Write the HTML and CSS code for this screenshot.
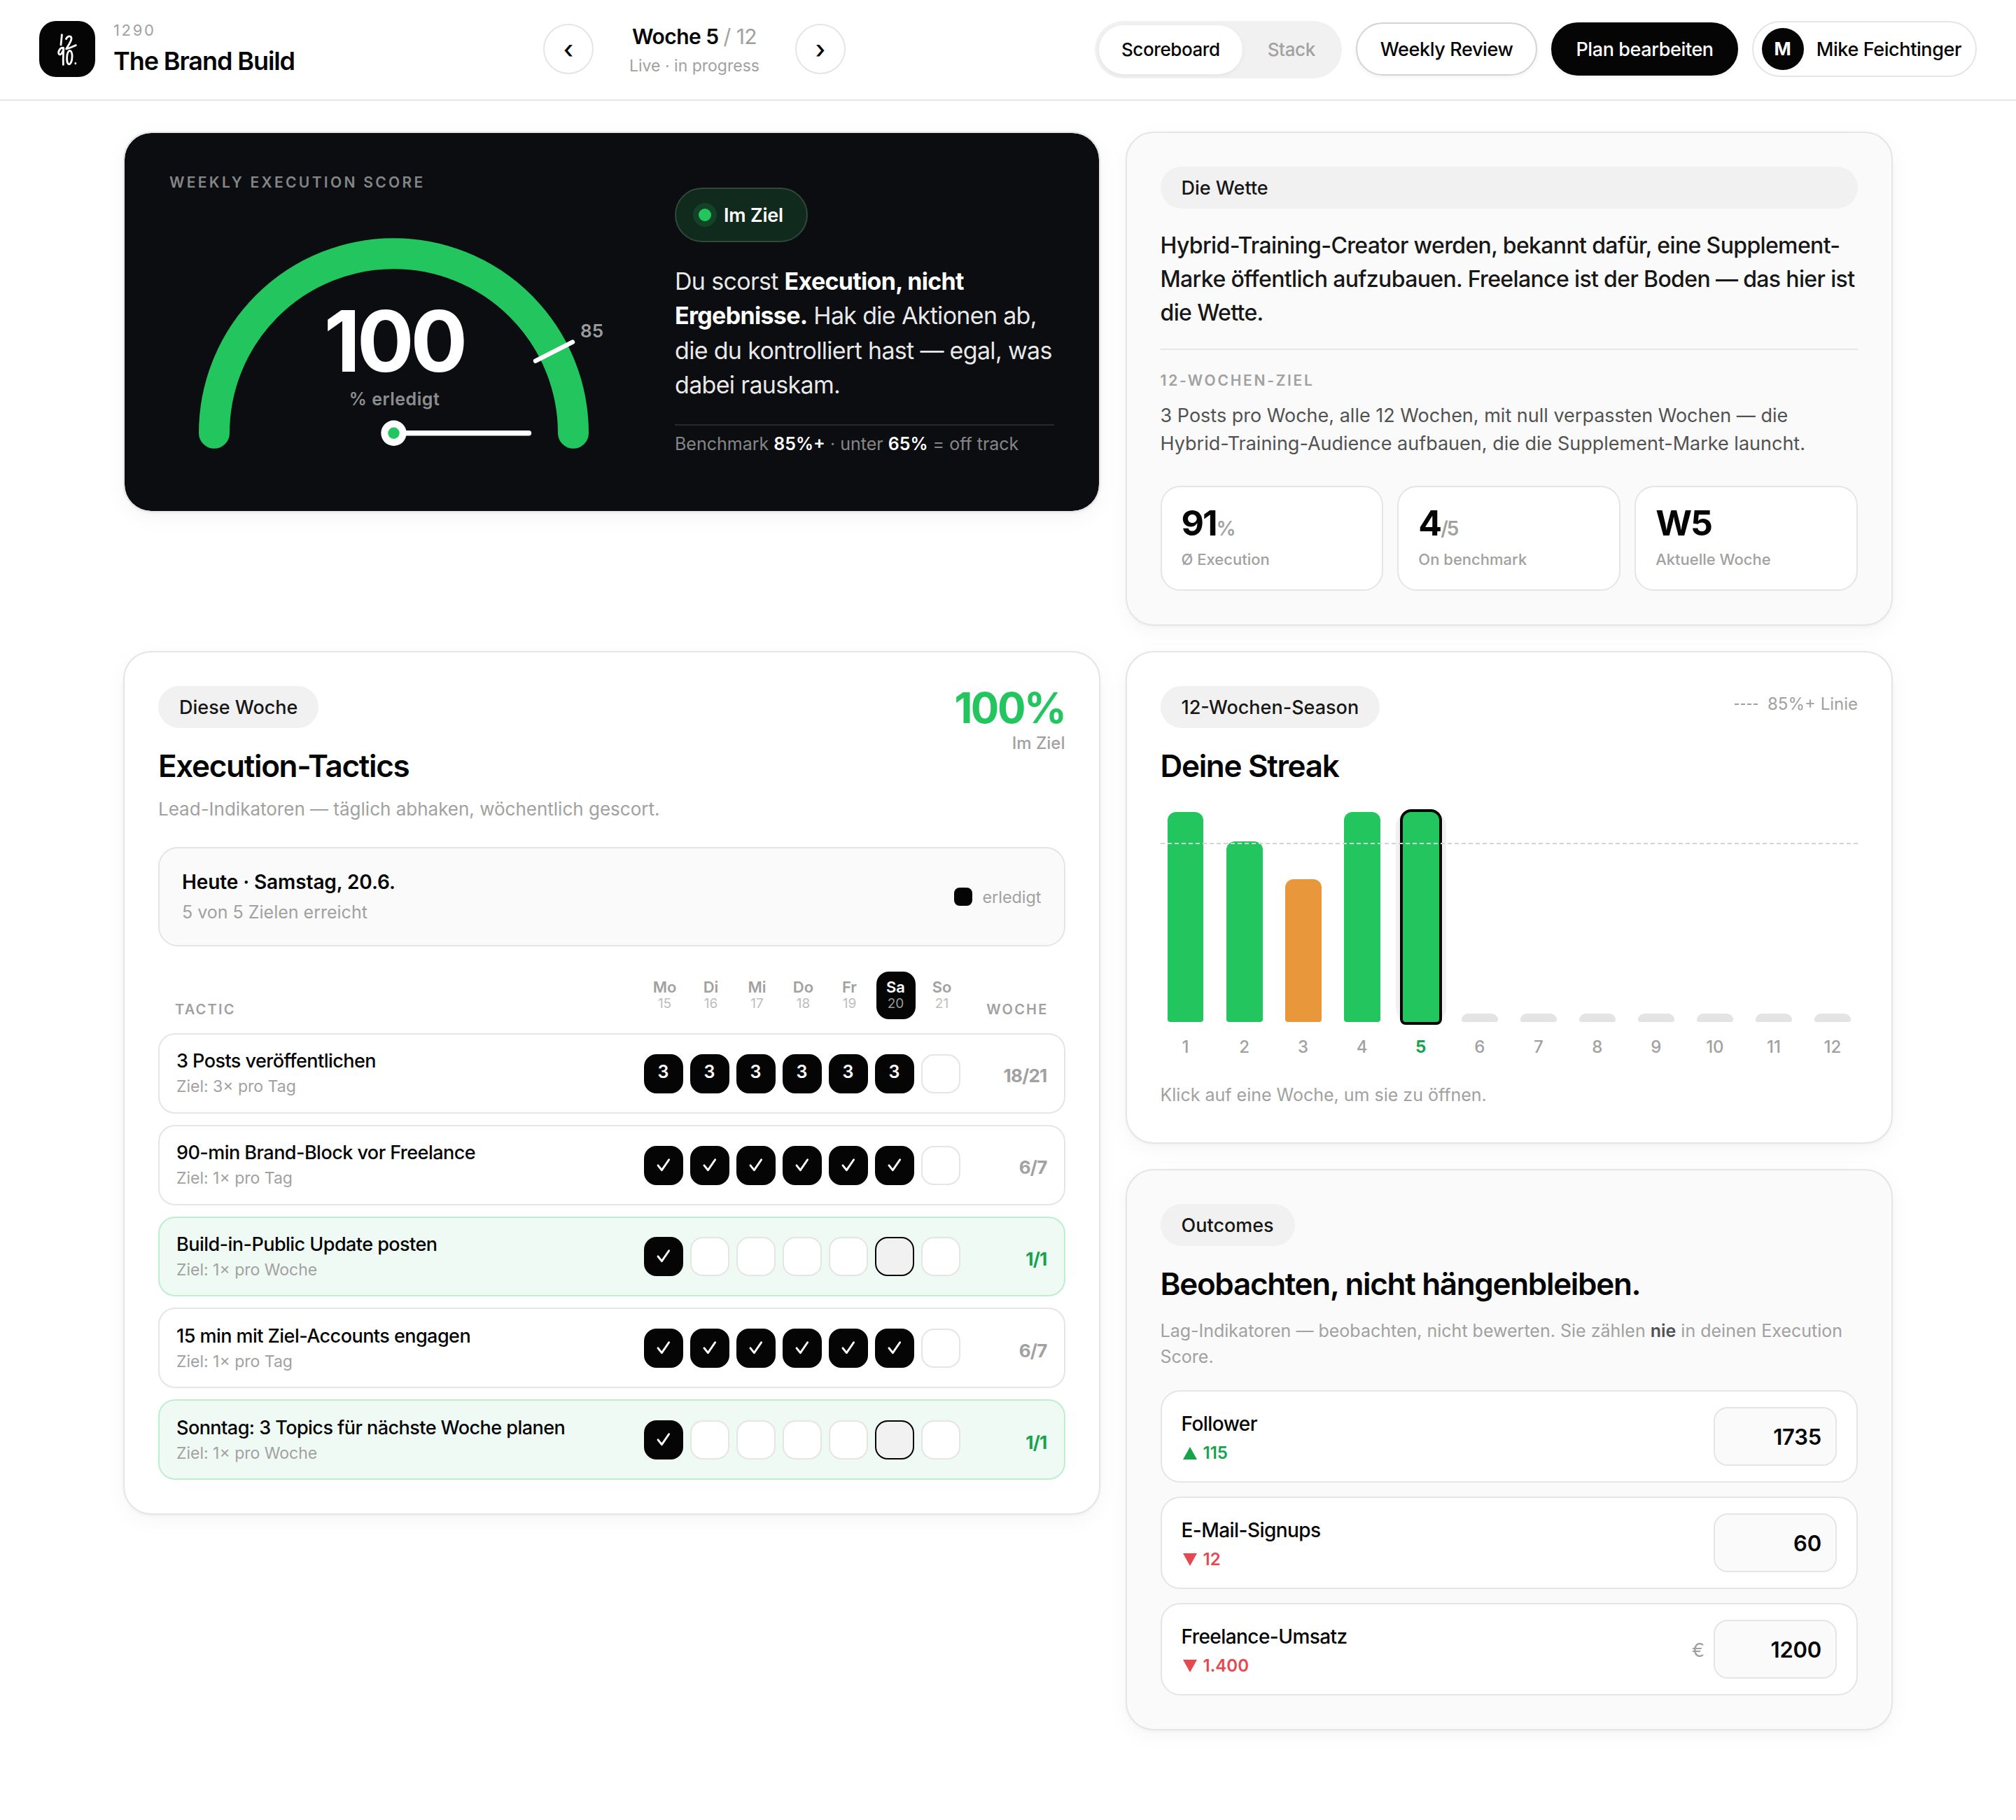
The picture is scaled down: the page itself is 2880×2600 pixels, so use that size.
FILE: index.html
```html
<!DOCTYPE html>
<html lang="de">
<head>
<meta charset="utf-8">
<title>The Brand Build – Scoreboard</title>
<link rel="stylesheet" href="styles.css">
</head>
<body>
<svg class="defs" aria-hidden="true">
  <symbol id="check" viewBox="0 0 52 52"><path d="M18 25.8 L23.4 32.6 L33.6 17.8" fill="none" stroke="currentColor" stroke-width="2.9" stroke-linecap="round" stroke-linejoin="round"/></symbol>
  <symbol id="tri-up" viewBox="0 0 20 18"><path d="M10 0 L20 18 H0 Z" fill="currentColor"/></symbol>
  <symbol id="tri-down" viewBox="0 0 20 18"><path d="M10 18 L20 0 H0 Z" fill="currentColor"/></symbol>
</svg>

<header class="topbar">
  <div class="brand">
    <div class="logo">
      <svg viewBox="0 0 80 80" fill="none" stroke="#fff" stroke-width="2.8" stroke-linecap="round" stroke-linejoin="round">
        <path d="M32.4 19.6 L31 34"/>
        <path d="M38.4 25.6 C40.5 20.5 46.5 20.6 46 25.4 C45.5 30 41.5 35 38.6 39.8 C42.5 39.4 48 36.4 52.4 34.6"/>
        <path d="M34.6 38.4 C30 37.4 26.2 44 28.4 47.4 C31 49.6 34.4 43.6 34.8 39.4 C34.4 47 34 55 34.4 62.4"/>
        <path d="M43.6 42.4 C38.6 43.4 38.4 61.6 42.4 61.8 C47.6 61.8 49 43.4 43.6 42.4 Z"/>
        <path d="M51.8 60.4 V60.8"/>
      </svg>
    </div>
    <div class="brand-text">
      <span class="brand-code">1290</span>
      <span class="brand-name">The Brand Build</span>
    </div>
  </div>
  <nav class="week-nav">
    <button class="round-btn">‹</button>
    <div class="week-label">
      <div class="week-now">Woche 5 <span>/ 12</span></div>
      <div class="week-state">Live · in progress</div>
    </div>
    <button class="round-btn">›</button>
  </nav>
  <div class="actions">
    <div class="toggle"><span class="toggle-item active">Scoreboard</span><span class="toggle-item">Stack</span></div>
    <button class="btn btn-light">Weekly Review</button>
    <button class="btn btn-dark">Plan bearbeiten</button>
    <div class="profile"><span class="avatar">M</span><span class="profile-name">Mike Feichtinger</span></div>
  </div>
</header>

<main class="board">
  <section class="card score">
    <div class="gauge">
      <div class="gauge-title">WEEKLY EXECUTION SCORE</div>
      <svg class="gauge-svg" viewBox="0 0 640 370">
        <path class="arc" d="M64 322.8 A256.5 256.5 0 0 1 577 322.8"/>
        <path class="tick" d="M523 219.6 L576 192.6"/>
        <text class="tick-label" x="587" y="186">85</text>
        <path class="needle" d="M320.5 322.8 H513.5"/>
        <circle cx="320.5" cy="322.8" r="18.2" fill="#fff"/>
        <circle cx="320.5" cy="322.8" r="8.2" fill="#22c55e"/>
        <text class="gauge-value" x="321" y="235">100</text>
        <text class="gauge-unit" x="321.5" y="283">% erledigt</text>
      </svg>
    </div>
    <div class="score-copy">
      <div class="status"><i></i>Im Ziel</div>
      <p class="score-text">Du scorst <b>Execution, nicht Ergebnisse.</b> Hak die Aktionen ab, die du kontrolliert hast — egal, was dabei rauskam.</p>
      <p class="score-foot">Benchmark <b>85%+</b> · unter <b>65%</b> = off track</p>
    </div>
  </section>

  <section class="card soft bet">
    <div class="pill">Die Wette</div>
    <p class="bet-text">Hybrid-Training-Creator werden, bekannt dafür, eine Supplement-Marke öffentlich aufzubauen. Freelance ist der Boden — das hier ist die Wette.</p>
    <div class="goal">
      <div class="goal-label">12-WOCHEN-ZIEL</div>
      <p class="goal-text">3 Posts pro Woche, alle 12 Wochen, mit null verpassten Wochen — die Hybrid-Training-Audience aufbauen, die die Supplement-Marke launcht.</p>
    </div>
    <div class="stats">
      <div class="stat"><div class="stat-value">91<small>%</small></div><div class="stat-label">Ø Execution</div></div>
      <div class="stat"><div class="stat-value">4<small>/5</small></div><div class="stat-label">On benchmark</div></div>
      <div class="stat"><div class="stat-value">W5</div><div class="stat-label">Aktuelle Woche</div></div>
    </div>
  </section>

  <section class="card tactics">
    <div class="card-head">
      <div>
        <div class="pill">Diese Woche</div>
        <h2 class="title">Execution-Tactics</h2>
        <p class="sub">Lead-Indikatoren — täglich abhaken, wöchentlich gescort.</p>
      </div>
      <div class="total"><div class="total-value">100%</div><div class="total-label">Im Ziel</div></div>
    </div>
    <div class="today">
      <div><div class="today-date">Heute · Samstag, 20.6.</div><div class="today-sub">5 von 5 Zielen erreicht</div></div>
      <div class="today-key"><i></i>erledigt</div>
    </div>
    <div class="thead">
      <span class="th">TACTIC</span>
      <div class="days">
        <div class="day">Mo<small>15</small></div><div class="day">Di<small>16</small></div><div class="day">Mi<small>17</small></div><div class="day">Do<small>18</small></div><div class="day">Fr<small>19</small></div><div class="day now">Sa<small>20</small></div><div class="day">So<small>21</small></div>
      </div>
      <span class="th th-right">WOCHE</span>
    </div>
    <div class="rows">
      <div class="row">
        <div><div class="row-name">3 Posts veröffentlichen</div><div class="row-goal">Ziel: 3× pro Tag</div></div>
        <div class="cells"><span class="cell on">3</span><span class="cell on">3</span><span class="cell on">3</span><span class="cell on">3</span><span class="cell on">3</span><span class="cell on">3</span><span class="cell"></span></div>
        <div class="count">18/21</div>
      </div>
      <div class="row">
        <div><div class="row-name">90-min Brand-Block vor Freelance</div><div class="row-goal">Ziel: 1× pro Tag</div></div>
        <div class="cells"><span class="cell on"><svg><use href="#check"/></svg></span><span class="cell on"><svg><use href="#check"/></svg></span><span class="cell on"><svg><use href="#check"/></svg></span><span class="cell on"><svg><use href="#check"/></svg></span><span class="cell on"><svg><use href="#check"/></svg></span><span class="cell on"><svg><use href="#check"/></svg></span><span class="cell"></span></div>
        <div class="count">6/7</div>
      </div>
      <div class="row done">
        <div><div class="row-name">Build-in-Public Update posten</div><div class="row-goal">Ziel: 1× pro Woche</div></div>
        <div class="cells"><span class="cell on"><svg><use href="#check"/></svg></span><span class="cell"></span><span class="cell"></span><span class="cell"></span><span class="cell"></span><span class="cell current"></span><span class="cell"></span></div>
        <div class="count">1/1</div>
      </div>
      <div class="row">
        <div><div class="row-name">15 min mit Ziel-Accounts engagen</div><div class="row-goal">Ziel: 1× pro Tag</div></div>
        <div class="cells"><span class="cell on"><svg><use href="#check"/></svg></span><span class="cell on"><svg><use href="#check"/></svg></span><span class="cell on"><svg><use href="#check"/></svg></span><span class="cell on"><svg><use href="#check"/></svg></span><span class="cell on"><svg><use href="#check"/></svg></span><span class="cell on"><svg><use href="#check"/></svg></span><span class="cell"></span></div>
        <div class="count">6/7</div>
      </div>
      <div class="row done">
        <div><div class="row-name">Sonntag: 3 Topics für nächste Woche planen</div><div class="row-goal">Ziel: 1× pro Woche</div></div>
        <div class="cells"><span class="cell on"><svg><use href="#check"/></svg></span><span class="cell"></span><span class="cell"></span><span class="cell"></span><span class="cell"></span><span class="cell current"></span><span class="cell"></span></div>
        <div class="count">1/1</div>
      </div>
    </div>
  </section>

  <div class="side">
    <section class="card season">
      <div class="card-head">
        <div>
          <div class="pill">12-Wochen-Season</div>
          <h2 class="title">Deine Streak</h2>
        </div>
        <div class="legend"><i></i>85%+ Linie</div>
      </div>
      <div class="chart">
        <div class="col"><div class="track"><i class="bar good" style="height:100%"></i></div><span>1</span></div>
        <div class="col"><div class="track"><i class="bar good" style="height:86%"></i></div><span>2</span></div>
        <div class="col"><div class="track"><i class="bar warn" style="height:68%"></i></div><span>3</span></div>
        <div class="col"><div class="track"><i class="bar good" style="height:100%"></i></div><span>4</span></div>
        <div class="col selected"><div class="track"><i class="bar good" style="height:100%"></i></div><span>5</span></div>
        <div class="col"><div class="track"><i class="bar" style="height:4%"></i></div><span>6</span></div>
        <div class="col"><div class="track"><i class="bar" style="height:4%"></i></div><span>7</span></div>
        <div class="col"><div class="track"><i class="bar" style="height:4%"></i></div><span>8</span></div>
        <div class="col"><div class="track"><i class="bar" style="height:4%"></i></div><span>9</span></div>
        <div class="col"><div class="track"><i class="bar" style="height:4%"></i></div><span>10</span></div>
        <div class="col"><div class="track"><i class="bar" style="height:4%"></i></div><span>11</span></div>
        <div class="col"><div class="track"><i class="bar" style="height:4%"></i></div><span>12</span></div>
        <div class="target"></div>
      </div>
      <p class="hint">Klick auf eine Woche, um sie zu öffnen.</p>
    </section>

    <section class="card soft outcomes">
      <div class="pill fit">Outcomes</div>
      <h2 class="title">Beobachten, nicht hängenbleiben.</h2>
      <p class="sub">Lag-Indikatoren — beobachten, nicht bewerten. Sie zählen <b>nie</b> in deinen Execution Score.</p>
      <div class="metrics">
        <div class="metric">
          <div class="metric-info"><div class="metric-name">Follower</div><div class="delta up"><svg><use href="#tri-up"/></svg>115</div></div>
          <div class="field"><div class="input">1735</div></div>
        </div>
        <div class="metric">
          <div class="metric-info"><div class="metric-name">E-Mail-Signups</div><div class="delta down"><svg><use href="#tri-down"/></svg>12</div></div>
          <div class="field"><div class="input">60</div></div>
        </div>
        <div class="metric">
          <div class="metric-info"><div class="metric-name">Freelance-Umsatz</div><div class="delta down"><svg><use href="#tri-down"/></svg>1.400</div></div>
          <div class="field"><span class="unit">€</span><div class="input">1200</div></div>
        </div>
      </div>
    </section>
  </div>
</main>
</body>
</html>
```
FILE: styles.css
```css
:root {
  --ink: #050505;
  --muted: #a1a1a1;
  --line: #e5e5e5;
  --fill: #f1f1f1;
  --soft: #fafafa;
  --green: #22c55e;
  --green-dark: #16a34a;
  --red: #e5484d;
}
* { box-sizing: border-box; margin: 0; padding: 0; }
body {
  width: 2880px;
  min-height: 2600px;
  background: #fff;
  color: var(--ink);
  font-family: Inter, "Liberation Sans", sans-serif;
  font-size: 28px;
  -webkit-font-smoothing: antialiased;
}
button { font: inherit; color: inherit; background: none; border: 0; }
.defs { display: none; }

/* Top bar */
.topbar {
  height: 144px;
  padding: 30px 56px 0;
  border-bottom: 2px solid var(--line);
  display: grid;
  grid-template-columns: 720px 432px 1fr;
  align-items: start;
}
.brand { display: flex; gap: 26px; }
.logo { width: 80px; height: 80px; border-radius: 24px; background: var(--ink); }
.logo svg { display: block; width: 80px; height: 80px; }
.brand-text { display: flex; flex-direction: column; }
.brand-code { font-size: 22px; line-height: 26px; letter-spacing: 2.64px; color: var(--muted); }
.brand-name { font-size: 36px; line-height: 44px; margin-top: 9px; font-weight: 600; letter-spacing: -1.08px; }
.week-nav { display: flex; justify-content: space-between; padding-top: 4px; }
.round-btn {
  width: 72px; height: 72px; border: 2px solid var(--line); border-radius: 50%;
  font-size: 36px; line-height: 68px; font-weight: 500;
}
.week-label { text-align: center; }
.week-now { font-size: 30px; line-height: 36px; font-weight: 600; letter-spacing: -0.55px; }
.week-now span { color: var(--muted); font-weight: 400; }
.week-state { font-size: 23px; line-height: 30px; margin-top: 9px; color: var(--muted); }
.actions { display: flex; justify-content: flex-end; gap: 20px; }
.toggle { display: flex; gap: 4px; height: 82px; padding: 6px; border-radius: 41px; background: var(--fill); }
.toggle-item { height: 70px; line-height: 70px; padding: 0 32px; border-radius: 35px; font-size: 26px; font-weight: 500; letter-spacing: -0.4px; color: var(--muted); }
.toggle-item.active { background: #fff; color: var(--ink); box-shadow: 0 2px 6px rgba(0,0,0,.06); }
.btn { height: 76px; margin-top: 2px; padding: 0 33px; border-radius: 38px; border: 2px solid var(--ink); font-size: 27px; font-weight: 500; letter-spacing: -0.4px; box-shadow: 0 2px 6px rgba(0,0,0,.06); }
.btn-light { border-color: #d4d4d4; background: #fff; }
.btn-dark { background: var(--ink); color: #fff; }
.profile { display: flex; align-items: center; gap: 18px; height: 80px; padding: 0 20px 0 12px; border: 2px solid var(--line); border-radius: 40px; }
.avatar { width: 60px; height: 60px; border-radius: 50%; background: var(--ink); color: #fff; text-align: center; line-height: 60px; font-size: 26px; font-weight: 700; }
.profile-name { font-size: 27px; font-weight: 500; letter-spacing: -0.4px; white-space: nowrap; }

/* Board */
.board {
  padding: 44px 176px 0;
  display: grid;
  grid-template-columns: 1.4fr 1.1fr;
  gap: 36px;
  align-items: start;
}
.card {
  border: 2px solid var(--line);
  border-radius: 40px;
  padding: 48px;
  background: #fff;
  box-shadow: 0 2px 4px rgba(0,0,0,.03), 0 8px 32px rgba(0,0,0,.04);
}
.soft { background: var(--soft); }
.side { display: grid; gap: 36px; }
.pill { height: 60px; line-height: 61px; padding: 0 30px; border-radius: 30px; background: var(--fill); font-size: 27px; font-weight: 500; color: #171717; width: 100%; }
.card-head .pill, .pill.fit { width: fit-content; }
.card-head { display: flex; justify-content: space-between; }
.title { margin-top: 28px; font-size: 44px; line-height: 53px; font-weight: 600; letter-spacing: -1.32px; }
.sub { font-size: 26px; line-height: 36.4px; color: var(--muted); }
.sub b { font-weight: 600; color: #525252; }

/* Weekly score */
.score {
  height: 544px; padding: 0 64px; background: #0b0d10; background-clip: padding-box;
  display: grid; grid-template-columns: 640px 1fr; column-gap: 82px; align-items: start;
}
.gauge { padding-top: 57px; }
.gauge-title { font-size: 21px; line-height: 28px; height: 49px; font-weight: 600; letter-spacing: 3.32px; color: rgba(255,255,255,.5); }
.gauge-svg { display: block; width: 640px; height: 370px; overflow: visible; }
.arc { fill: none; stroke: var(--green); stroke-width: 44; stroke-linecap: round; }
.tick { stroke: #fff; stroke-width: 6.4; stroke-linecap: round; }
.needle { stroke: #fff; stroke-width: 7.4; stroke-linecap: round; }
.tick-label { font-size: 26px; font-weight: 600; fill: rgba(255,255,255,.6); }
.gauge-value { font-size: 121px; font-weight: 700; letter-spacing: -5px; fill: #fff; text-anchor: middle; }
.gauge-unit { font-size: 25px; font-weight: 600; letter-spacing: .5px; fill: rgba(255,255,255,.55); text-anchor: middle; }
.score-copy { padding-top: 78px; }
.status {
  display: flex; align-items: center; gap: 18px; width: fit-content; height: 78px; padding: 0 33px 0 32px;
  border: 2px solid #2f4a3b; border-radius: 39px; background: #102a1d; color: #fff; font-size: 27px; line-height: 35px; font-weight: 600; letter-spacing: -0.2px;
}
.status i { width: 18px; height: 18px; border-radius: 50%; background: var(--green); box-shadow: 0 0 0 8px #124326; }
.score-text { margin-top: 31px; font-size: 34px; line-height: 49.3px; letter-spacing: -0.68px; color: rgba(255,255,255,.92); }
.score-text b { font-weight: 700; color: #fff; }
.score-foot { margin-top: 32px; border-top: 2px solid #27292c; padding-top: 10px; font-size: 25px; line-height: 32px; color: rgba(255,255,255,.5); }
.score-foot b { font-weight: 600; color: #fff; }

/* The bet */
.bet-text { margin-top: 29px; font-size: 32px; line-height: 48px; font-weight: 500; letter-spacing: -0.64px; color: #171717; }
.goal { margin-top: 27px; border-top: 2px solid var(--line); padding-top: 31px; }
.goal-label { font-size: 21px; line-height: 26px; font-weight: 600; letter-spacing: 2.73px; color: var(--muted); }
.goal-text { margin-top: 17px; font-size: 27px; line-height: 40px; color: #525252; }
.stats { display: grid; grid-template-columns: repeat(3, 1fr); gap: 20px; margin-top: 40px; }
.stat { height: 150px; padding: 21px 28px 0; border: 2px solid var(--line); border-radius: 28px; background: #fff; }
.stat-value { height: 60px; font-size: 50px; line-height: 60px; font-weight: 700; letter-spacing: -2px; }
.stat-value small { font-size: 28px; line-height: 1; font-weight: 600; color: var(--muted); }
.stat-label { margin-top: 8px; font-size: 22px; line-height: 28px; font-weight: 500; color: var(--muted); }

/* Tactics */
.tactics .sub { margin-top: 17px; }
.total { text-align: right; }
.total-value { font-size: 60px; line-height: 62px; font-weight: 700; letter-spacing: -2.4px; color: var(--green); }
.total-label { margin-top: 5px; font-size: 24px; line-height: 30px; font-weight: 500; color: var(--muted); }
.today { display: flex; justify-content: space-between; align-items: center; height: 142px; margin-top: 35.6px; padding: 0 32px; border: 2px solid var(--line); border-radius: 28px; background: var(--soft); }
.today-date { line-height: 36px; font-weight: 600; letter-spacing: -0.1px; }
.today-sub { margin-top: 8px; font-size: 25px; line-height: 34px; color: var(--muted); }
.today-key { display: flex; align-items: center; gap: 14px; font-size: 23.4px; color: var(--muted); }
.today-key i { width: 26px; height: 26px; border-radius: 8px; background: var(--ink); }
.thead, .row { display: grid; grid-template-columns: 1fr 452px 100px; column-gap: 24px; }
.thead { padding: 0 24px; margin-top: 36px; height: 68px; align-items: end; }
.th { font-size: 20px; line-height: 24px; font-weight: 600; letter-spacing: 2.2px; color: var(--muted); padding-bottom: 2px; }
.th-right { text-align: right; }
.days, .cells { display: flex; gap: 10px; }
.day { width: 56px; height: 68px; padding-top: 8px; border-radius: 18px; text-align: center; font-size: 22px; line-height: 29px; font-weight: 600; color: var(--muted); }
.day small { display: block; font-size: 19px; line-height: 18px; font-weight: 400; color: #bdbdbd; }
.day.now { background: var(--ink); color: #fff; }
.day.now small { color: #9b9b9b; }
.rows { display: grid; gap: 16px; margin-top: 20px; }
.row { height: 114.8px; padding: 0 24px; align-items: center; border: 2px solid var(--line); border-radius: 24px; background: #fff; }
.row.done { background: #f0faf5; border-color: #bdeed0; }
.row-name { font-size: 27px; line-height: 34px; font-weight: 500; letter-spacing: -0.54px; }
.row-goal { margin-top: 5px; margin-bottom: 1px; font-size: 23px; line-height: 28px; color: var(--muted); }
.cells { padding-top: 1px; }
.cell { width: 56px; height: 56px; border: 2px solid var(--line); border-radius: 18px; background: #fff; display: flex; align-items: center; justify-content: center; }
.cell.on { background: var(--ink); border-color: var(--ink); color: #fff; font-size: 25px; font-weight: 600; padding-bottom: 5px; }
.cell.on svg { flex: none; width: 52px; height: 52px; margin-bottom: -5px; }
.cell.current { background: var(--fill); border-color: var(--ink); }
.count { padding-top: 7px; text-align: right; font-size: 26px; font-weight: 700; letter-spacing: -0.78px; color: var(--muted); }
.done .count { color: var(--green-dark); }

/* Season chart */
.season { height: 704px; }
.legend { display: flex; align-items: center; gap: 14px; height: 51px; font-size: 24px; color: var(--muted); }
.legend i { width: 33px; border-top: 2px dashed var(--muted); }
.chart { position: relative; display: grid; grid-template-columns: repeat(12, 1fr); gap: 12px; margin-top: 39px; }
.track { height: 300px; display: flex; align-items: flex-end; justify-content: center; border-radius: 20px; }
.col span { display: block; margin-top: 20px; text-align: center; font-size: 24px; line-height: 32px; font-weight: 500; color: var(--muted); }
.bar { width: 72%; border-radius: 12px 12px 4px 4px; background: #e4e4e4; }
.bar.good { background: var(--green); }
.bar.warn { background: #e8973a; }
.selected .track { background: var(--fill); }
.selected .bar { box-shadow: 0 0 0 4px var(--ink); }
.selected span { font-weight: 700; color: var(--green-dark); }
.target { position: absolute; left: 0; right: 0; top: 44px; border-top: 2px dashed #d4d4d4; }
.hint { margin-top: 34px; font-size: 25px; line-height: 36px; color: var(--muted); }

/* Outcomes */
.outcomes .sub { margin-top: 22px; font-size: 25px; line-height: 37px; }
.metrics { display: grid; gap: 20px; margin-top: 29px; }
.metric { display: flex; justify-content: space-between; align-items: center; height: 132px; padding: 0 28px; border: 2px solid var(--line); border-radius: 28px; background: #fff; }
.metric-info { padding-top: 4px; }
.metric-name { line-height: 36px; font-weight: 500; letter-spacing: -0.56px; }
.delta { display: flex; align-items: center; gap: 9px; margin-top: 8px; padding-left: 2px; font-size: 24px; line-height: 32px; font-weight: 600; }
.delta svg { width: 20px; height: 18px; }
.up { color: var(--green-dark); }
.down { color: var(--red); }
.field { display: flex; align-items: center; gap: 13px; }
.input { width: 176px; height: 84px; line-height: 81px; padding: 0 20px; border: 2px solid var(--line); border-radius: 20px; background: var(--soft); text-align: right; font-size: 31px; font-weight: 600; letter-spacing: -0.2px; }
.unit { padding-top: 3px; font-size: 27px; color: var(--muted); }
```
